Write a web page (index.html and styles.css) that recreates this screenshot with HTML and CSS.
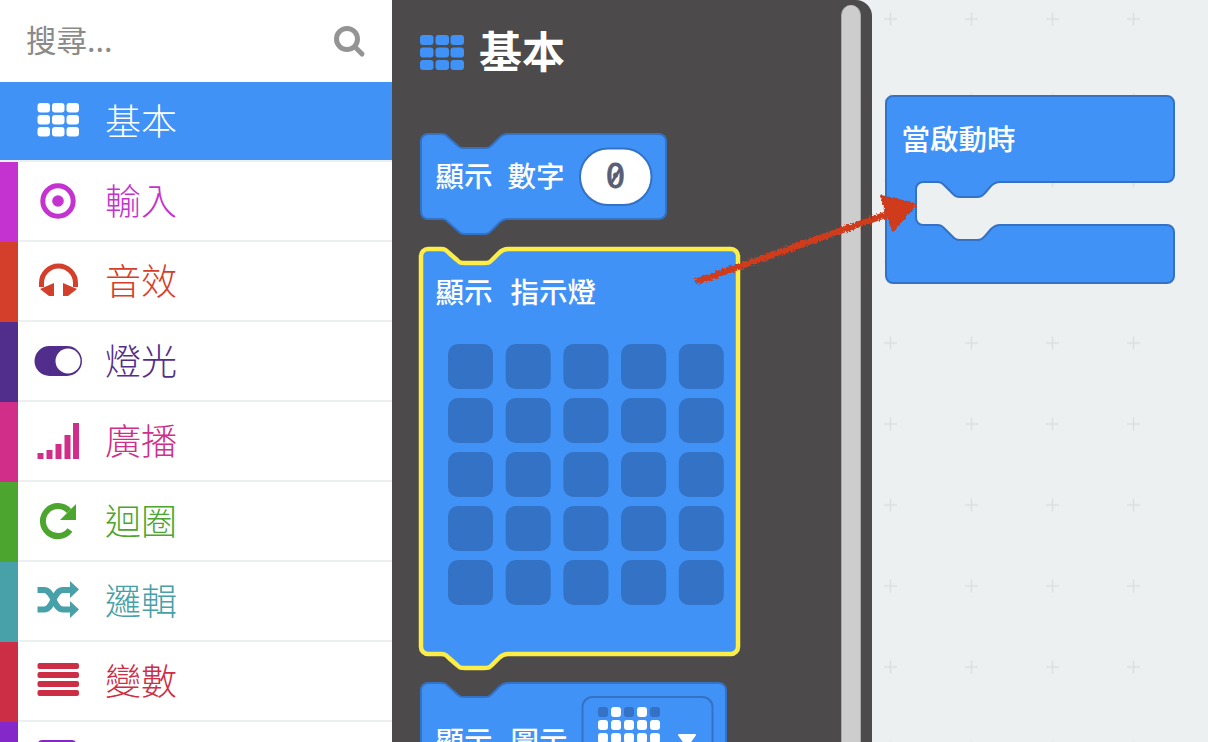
FILE: index.html
```html
<!DOCTYPE html>
<html lang="zh-Hant">
<head>
	<meta charset="UTF-8">
	<title>基本</title>
	<link rel="stylesheet" href="styles.css">
</head>
<body>
	<div class="page">
		<div class="sidebar">
			<div class="search">
				<input type="text" class="search-input" placeholder="搜尋...">
				<svg class="search-icon" viewBox="0 0 34 34"><circle cx="14" cy="14" r="10.5"/><path d="M22 22l7 7"/></svg>
			</div>
			<div class="cat cat-basic">
				<svg class="cat-icon" viewBox="0 0 50 40"><rect x="4.5" y="2" width="12.5" height="9.500" rx="3"/><rect x="19" y="2" width="12.5" height="9.500" rx="3"/><rect x="33.5" y="2" width="12.5" height="9.500" rx="3"/><rect x="4.5" y="14" width="12.5" height="9.500" rx="3"/><rect x="19" y="14" width="12.5" height="9.500" rx="3"/><rect x="33.5" y="14" width="12.5" height="9.500" rx="3"/><rect x="4.5" y="26" width="12.5" height="9.500" rx="3"/><rect x="19" y="26" width="12.5" height="9.500" rx="3"/><rect x="33.5" y="26" width="12.5" height="9.500" rx="3"/></svg>
				<span class="cat-label">基本</span>
			</div>
			<div class="cat cat-input">
				<svg class="cat-icon" viewBox="0 0 50 40"><circle class="line" cx="25" cy="20" r="15.2" stroke-width="5"/><circle cx="25" cy="20" r="5.8"/></svg>
				<span class="cat-label">輸入</span>
			</div>
			<div class="cat cat-music">
				<svg class="cat-icon" viewBox="0 0 50 40"><path class="line" d="M8.5 26v-4a17 17 0 0 1 34 0v4" stroke-width="5"/><path d="M7 28l14-6v13h-5zM44 28l-14-6v13h5z"/></svg>
				<span class="cat-label">音效</span>
			</div>
			<div class="cat cat-led">
				<svg class="cat-icon" viewBox="0 0 50 40"><rect x="1.5" y="5" width="47.5" height="30" rx="15"/><circle class="knob" cx="35" cy="20" r="12.5"/></svg>
				<span class="cat-label">燈光</span>
			</div>
			<div class="cat cat-radio">
				<svg class="cat-icon" viewBox="0 0 50 40"><rect x="4.5" y="32" width="6" height="6"/><rect x="13.5" y="29" width="6" height="9"/><rect x="22.5" y="23" width="6" height="15"/><rect x="31.5" y="14" width="6" height="24"/><rect x="40" y="2" width="6" height="36"/></svg>
				<span class="cat-label">廣播</span>
			</div>
			<div class="cat cat-loops">
				<svg class="cat-icon" viewBox="0 0 50 40"><path class="line" d="M36 10A15 15 0 1 0 37 29" stroke-width="6"/><path d="M43 3v16H27z"/></svg>
				<span class="cat-label">迴圈</span>
			</div>
			<div class="cat cat-logic">
				<svg class="cat-icon" viewBox="0 0 50 40"><path class="line" d="M4.5 9H11C21 9 20 28.500 30 28.500H38M4.500 28.500H11C21 28.500 20 9 30 9H38" stroke-width="6"/><path d="M37 0l9 8.500-9 8.500zM37 20l9 8.500-9 8.500z"/></svg>
				<span class="cat-label">邏輯</span>
			</div>
			<div class="cat cat-vars">
				<svg class="cat-icon" viewBox="0 0 50 40"><rect x="4.5" y="2" width="41.5" height="6" rx="2"/><rect x="4.5" y="11" width="41.5" height="6" rx="2"/><rect x="4.5" y="20" width="41.5" height="6" rx="2"/><rect x="4.5" y="29" width="41.5" height="6" rx="2"/></svg>
				<span class="cat-label">變數</span>
			</div>
			<div class="cat cat-math">
				<svg class="cat-icon" viewBox="0 0 50 40"><rect x="5" y="-1" width="38" height="38" rx="4"/></svg>
			</div>
		</div>

		<div class="flyout">
			<div class="flyout-main">
				<div class="flyout-head">
					<svg class="flyout-icon" viewBox="0 0 44 35"><rect x="0" y="0" width="13.500" height="10" rx="3"/><rect x="15.500" y="0" width="13.500" height="10" rx="3"/><rect x="30.500" y="0" width="13.500" height="10" rx="3"/><rect x="0" y="12.500" width="13.500" height="10" rx="3"/><rect x="15.500" y="12.500" width="13.500" height="10" rx="3"/><rect x="30.500" y="12.500" width="13.500" height="10" rx="3"/><rect x="0" y="25" width="13.500" height="10" rx="3"/><rect x="15.500" y="25" width="13.500" height="10" rx="3"/><rect x="30.500" y="25" width="13.500" height="10" rx="3"/></svg>
					<span class="flyout-title">基本</span>
				</div>
				<svg class="flyout-blocks" viewBox="392 110 449 632">
					<!-- show number -->
					<path class="block" d="M421 141a7 7 0 0 1 7-7H441c4 0 5 1 8 4l8 7c3 3 4 3 8 3H484c4 0 5 0 8-3l7-7c3-3 5-4 9-4H659a7 7 0 0 1 7 7V212a7 7 0 0 1-7 7H508c-4 0-6 1-9 4l-7 7c-3 3-4 4-8 4H465c-4 0-5-1-8-4l-8-7c-3-3-4-4-8-4H428a7 7 0 0 1-7-7Z"/>
					<text class="block-text" x="435.500" y="187">顯示</text>
					<text class="block-text" x="507.500" y="187">數字</text>
					<rect class="pill" x="580" y="148.500" width="71.500" height="56.500" rx="28"/>
					<text class="pill-text" x="615.500" y="188">0</text>
					<path class="pill-slash" d="M611 183.500L620.500 168.500"/>

					<!-- show leds, selected -->
					<path class="block block-on" d="M421 256a7 7 0 0 1 7-7H441c4 0 5 1 8 4l8 7c3 3 4 3 8 3H484c4 0 5 0 8-3l7-7c3-3 5-4 9-4H731a7 7 0 0 1 7 7V647a7 7 0 0 1-7 7H508c-4 0-6 1-9 4l-7 7c-3 3-4 3-8 3H465c-4 0-5 0-8-3l-8-7c-3-3-4-4-8-4H428a7 7 0 0 1-7-7Z"/>
					<text class="block-text" x="435.500" y="303">顯示</text>
					<text class="block-text" x="510.500" y="303">指示燈</text>
					<g class="leds">
						<rect x="448" y="344" width="45" height="45" rx="10"/><rect x="505.700" y="344" width="45" height="45" rx="10"/><rect x="563.400" y="344" width="45" height="45" rx="10"/><rect x="621.100" y="344" width="45" height="45" rx="10"/><rect x="678.800" y="344" width="45" height="45" rx="10"/>
						<rect x="448" y="398" width="45" height="45" rx="10"/><rect x="505.700" y="398" width="45" height="45" rx="10"/><rect x="563.400" y="398" width="45" height="45" rx="10"/><rect x="621.100" y="398" width="45" height="45" rx="10"/><rect x="678.800" y="398" width="45" height="45" rx="10"/>
						<rect x="448" y="452" width="45" height="45" rx="10"/><rect x="505.700" y="452" width="45" height="45" rx="10"/><rect x="563.400" y="452" width="45" height="45" rx="10"/><rect x="621.100" y="452" width="45" height="45" rx="10"/><rect x="678.800" y="452" width="45" height="45" rx="10"/>
						<rect x="448" y="506" width="45" height="45" rx="10"/><rect x="505.700" y="506" width="45" height="45" rx="10"/><rect x="563.400" y="506" width="45" height="45" rx="10"/><rect x="621.100" y="506" width="45" height="45" rx="10"/><rect x="678.800" y="506" width="45" height="45" rx="10"/>
						<rect x="448" y="560" width="45" height="45" rx="10"/><rect x="505.700" y="560" width="45" height="45" rx="10"/><rect x="563.400" y="560" width="45" height="45" rx="10"/><rect x="621.100" y="560" width="45" height="45" rx="10"/><rect x="678.800" y="560" width="45" height="45" rx="10"/>
					</g>

					<!-- show icon -->
					<path class="block" d="M421 690a7 7 0 0 1 7-7H441c4 0 5 1 8 4l8 7c3 3 4 3 8 3H484c4 0 5 0 8-3l7-7c3-3 5-4 9-4H719a7 7 0 0 1 7 7V780H421Z"/>
					<text class="block-text" x="435.500" y="752">顯示</text>
					<text class="block-text" x="510.500" y="752">圖示</text>
					<rect class="field" x="582.500" y="697" width="130" height="70" rx="10"/>
					<g class="mini-off">
						<rect x="598" y="707" width="10" height="10" rx="3"/><rect x="624" y="707" width="10" height="10" rx="3"/><rect x="650" y="707" width="10" height="10" rx="3"/>
					</g>
					<g class="mini-on">
						<rect x="611" y="707" width="10" height="10" rx="3"/><rect x="637" y="707" width="10" height="10" rx="3"/>
						<rect x="598" y="720" width="10" height="10" rx="3"/><rect x="611" y="720" width="10" height="10" rx="3"/><rect x="624" y="720" width="10" height="10" rx="3"/><rect x="637" y="720" width="10" height="10" rx="3"/><rect x="650" y="720" width="10" height="10" rx="3"/>
						<rect x="598" y="733" width="10" height="10" rx="3"/><rect x="611" y="733" width="10" height="10" rx="3"/><rect x="624" y="733" width="10" height="10" rx="3"/><rect x="637" y="733" width="10" height="10" rx="3"/><rect x="650" y="733" width="10" height="10" rx="3"/>
						<path class="mini-arrow" d="M679 735h16l-8 11z"/>
					</g>
				</svg>
			</div>
			<div class="scrollbar"></div>
		</div>

		<div class="workspace">
			<svg class="workspace-svg" viewBox="872 0 336 742">
				<defs>
					<pattern id="plus" x="884" y="12.500" width="81" height="81" patternUnits="userSpaceOnUse">
						<path class="plus" d="M0 6.500h13M6.500 0v13"/>
					</pattern>
				</defs>
				<rect x="872" y="0" width="336" height="742" fill="url(#plus)"/>
				<path class="block" d="M886 103a7 7 0 0 1 7-7H1167a7 7 0 0 1 7 7V175a7 7 0 0 1-7 7H1000c-4 0-6 1-9 4l-6 7c-3 3-4 4-8 4H960c-4 0-5-1-8-4l-7-7c-3-3-4-4-8-4H923a7 7 0 0 0-7 7V218a7 7 0 0 0 7 7H937c4 0 5 1 8 4l7 7c3 3 4 4 8 4H977c4 0 5-1 8-4l6-7c3-3 5-4 9-4H1167a7 7 0 0 1 7 7V276a7 7 0 0 1-7 7H893a7 7 0 0 1-7-7Z"/>
				<text class="block-text" x="901.500" y="150">當啟動時</text>
			</svg>
		</div>
	</div>

	<!-- hand drawn arrow on top of the screenshot -->
	<svg class="arrow" viewBox="0 0 1208 742">
		<defs>
			<filter id="rough" x="-10%" y="-30%" width="120%" height="160%">
				<feTurbulence type="fractalNoise" baseFrequency="0.45" numOctaves="2" seed="4"/>
				<feDisplacementMap in="SourceGraphic" scale="5"/>
			</filter>
		</defs>
		<g filter="url(#rough)">
			<path class="arrow-line" d="M698 281L800 245L885 215"/>
			<path class="arrow-head" d="M881 196L916 204L893 231Z"/>
		</g>
	</svg>
</body>
</html>
```

FILE: styles.css
```css
body{
	margin: 0;
	background-color: #ecf0f1;
	font-family: "Noto Sans CJK TC", "Liberation Sans", sans-serif;
	overflow: hidden;
}
.page{
	display: flex;
	height: 742px;
	overflow: hidden;
}

/* category list */
.sidebar{
	width: 392px;
	flex: none;
	background-color: #ecf0f1;
}
.search{
	display: flex;
	align-items: center;
	height: 82px;
	padding: 0 25px 0 26px;
	box-sizing: border-box;
	background-color: #fff;
}
.search-input{
	flex: 1;
	min-width: 0;
	height: 40px;
	padding: 0 0 4px;
	border: none;
	outline: none;
	font-family: inherit;
	font-size: 30.500px;
	background: none;
}
.search-input::placeholder{
	color: #8a8a8a;
	opacity: 1;
}
.search-icon{
	width: 34px;
	height: 34px;
	margin-top: 2px;
	fill: none;
	stroke: #949494;
	stroke-width: 5;
	stroke-linecap: round;
}
.cat{
	display: flex;
	align-items: center;
	height: 80px;
	box-sizing: border-box;
	padding-bottom: 2px;
	border-left: 18px solid;
	background: linear-gradient(#fff, #fff) no-repeat top / 100% 78px, #ecf0f1;
	color: var(--cat);
	border-left-color: var(--cat);
}
.cat-icon{
	width: 50px;
	height: 40px;
	margin: 0 22px 0 15px;
	flex: none;
	fill: var(--cat);
	overflow: visible;
}
.cat-icon .line{
	fill: none;
	stroke: var(--cat);
}
.cat-icon .knob{
	fill: #fff;
}
.cat-label{
	font-size: 36px;
	font-weight: 300;
	line-height: 40px;
	padding-bottom: 4px;
}
.cat-basic{
	height: 78px;
	margin-bottom: 2px;
	padding-bottom: 0;
	background: #4092f6;
	color: #fff;
	border-left-color: #4092f6;
}
.cat-basic .cat-icon{
	fill: #fff;
}
.cat-input{ --cat: #c433cf; }
.cat-music{ --cat: #d43f2c; }
.cat-led{ --cat: #522e8c; }
.cat-radio{ --cat: #d02e89; }
.cat-loops{ --cat: #4ca52f; }
.cat-logic{ --cat: #48a1a8; }
.cat-vars{ --cat: #cc2e45; }
.cat-math{ --cat: #8428c9; }

/* block flyout */
.flyout{
	display: flex;
	width: 480px;
	flex: none;
	box-sizing: border-box;
	padding-right: 11px;
	background-color: #4c4a4b;
	border-top-right-radius: 16px;
}
.flyout-main{
	flex: 1;
	min-width: 0;
}
.flyout-head{
	display: flex;
	align-items: center;
	height: 110px;
	box-sizing: border-box;
	padding: 0 0 5px 28px;
}
.flyout-icon{
	width: 44px;
	height: 35px;
	margin-right: 15px;
	fill: #4092f6;
}
.flyout-title{
	font-size: 43px;
	font-weight: 700;
	line-height: 50px;
	margin-bottom: 8px;
	color: #fff;
}
.flyout-blocks{
	display: block;
	width: 449px;
	height: 632px;
}
.scrollbar{
	width: 20px;
	flex: none;
	box-sizing: border-box;
	margin-top: 5px;
	background-color: #cdcdcd;
	border-left: 1px solid #a8a8a8;
	border-right: 1px solid #a8a8a8;
	border-radius: 10px 10px 0 0;
}

/* blocks */
.block{
	fill: #4092f6;
	stroke: #3372c4;
	stroke-width: 2;
}
.block-on{
	stroke: #fced47;
	stroke-width: 4.500;
}
.block-text{
	font-size: 28.500px;
	font-weight: 500;
	fill: #fff;
}
.pill{
	fill: #fff;
	stroke: #3372c4;
	stroke-width: 2;
}
.pill-text{
	font-family: "DejaVu Sans Mono", monospace;
	font-size: 33px;
	text-anchor: middle;
	fill: #575e75;
	stroke: #575e75;
	stroke-width: 0.800;
}
.pill-slash{
	fill: none;
	stroke: #575e75;
	stroke-width: 3;
}
.leds rect,
.mini-off rect{
	fill: #3372c4;
}
.field{
	fill: #4092f6;
	stroke: #3372c4;
	stroke-width: 2;
}
.mini-on rect,
.mini-on path{
	fill: #fff;
}
.mini-arrow{
	stroke: #fff;
	stroke-width: 2;
	stroke-linejoin: round;
}

/* workspace */
.workspace{
	flex: 1;
	min-width: 0;
}
.workspace-svg{
	display: block;
	width: 336px;
	height: 742px;
}
.plus{
	fill: none;
	stroke: #dcdfe0;
	stroke-width: 1.500;
}

/* arrow */
.arrow{
	position: absolute;
	left: 0;
	top: 0;
	width: 1208px;
	height: 742px;
	pointer-events: none;
}
.arrow-line{
	fill: none;
	stroke: #d03a1c;
	stroke-width: 6.500;
	stroke-linecap: round;
}
.arrow-head{
	fill: #d03a1c;
	stroke: #d03a1c;
	stroke-width: 2;
	stroke-linejoin: round;
}
```
